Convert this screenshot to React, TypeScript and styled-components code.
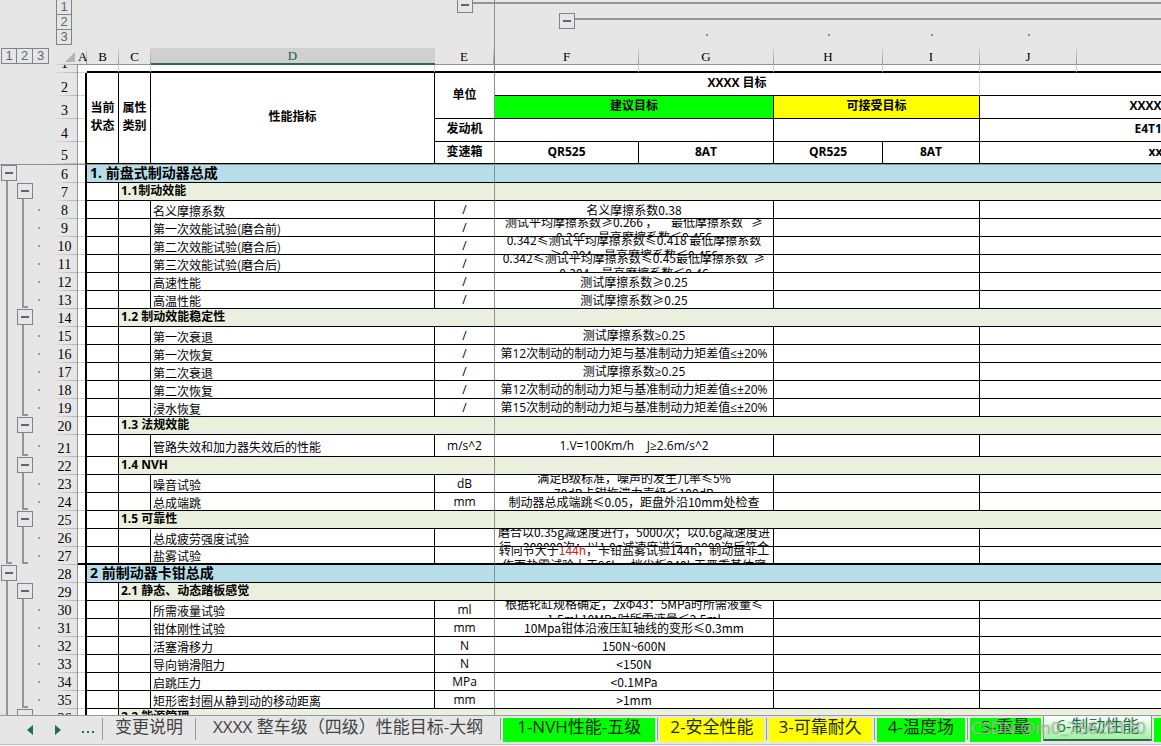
import React from "react";
import styled, { createGlobalStyle, css } from "styled-components";

const UI = '"Open Sans", "Noto Sans CJK SC", sans-serif';
const SONG = '"Noto Sans CJK SC", sans-serif';
const HEAD = '"Liberation Serif", serif';

const LINE = "#000";
const FAINT = "#d0d0d0";
const FREEZE = "#8f8f8f";
const CHROME = "#e6e6e6";
const OUTLINE = "#949494";

const GlobalStyle = createGlobalStyle`
  * { box-sizing: border-box; }
  body { margin: 0; background: ${CHROME}; font-family: ${UI}; font-size: 12px; color: #000; }
  :where(th, td) { padding: 0; }
  :where(button) { margin: 0; padding: 0; font: inherit; color: inherit; background: none; border: 0; cursor: pointer; }
`;

const Window = styled.div`
  display: flex;
  flex-direction: column;
  height: 100vh;
  overflow: hidden;
  background: ${CHROME};
`;

const Sheet = styled.main`
  flex: 1;
  min-height: 0;
  overflow: hidden;
`;

const Grid = styled.table`
  width: 1338px;
  table-layout: fixed;
  border-collapse: separate;
  border-spacing: 0;
  line-height: 16px;
`;

const Col = styled.col<{ $w: number }>`
  width: ${(p) => p.$w}px;
`;

/* ---------- outline controls ---------- */

const ToggleButton = styled.button`
  display: flex;
  flex: none;
  align-items: center;
  justify-content: center;
  width: 16px;
  height: 16px;
  border: 1px solid #808488;

  &::before {
    content: "";
    width: 8px;
    height: 2px;
    background: #5f6368;
  }
`;

const levelButton = css`
  height: 16px;
  width: 16px;
  border: 1px solid #808488;
  font-family: "Liberation Sans", sans-serif;
  font-size: 13px;
  line-height: 14px;
  font-weight: 400;
  color: #666;
`;

const RowLevel = styled.button`
  ${levelButton}
  & + & { border-left: 0; }
`;

const ColumnLevel = styled.button`
  ${levelButton}
  & + & { border-top: 0; }
`;

const RowLevels = styled.div`
  display: flex;
  height: 16px;
  padding-left: 1px;
`;

const ColumnLevels = styled.div`
  display: flex;
  flex-direction: column;
  height: 48px;
  margin-left: 4px;
  overflow: hidden;
  justify-content: flex-end;
  padding-bottom: 3px;
`;

const ColumnTracks = styled.div`
  display: grid;
  grid-template-rows: 13px 16px 16px;
  height: 48px;
`;

const ColumnSlot = styled.div`
  display: flex;
  align-items: flex-end;
  overflow: hidden;
`;

const ColumnRail = styled.span<{ $on: boolean }>`
  flex: 1;
  height: 2px;
  margin-bottom: 9px;
  background: ${(p) => (p.$on ? OUTLINE : "transparent")};
`;

const ColumnDot = styled.span`
  width: 2px;
  height: 2px;
  margin: 5px auto auto;
  background: #8a8a8a;
`;

const RowTracks = styled.div<{ $h: number }>`
  display: grid;
  grid-template-columns: 16px 16px 16px;
  height: ${(p) => p.$h}px;
  padding-left: 1px;
`;

const RowSlot = styled.div`
  display: flex;
  flex-direction: column;
  min-height: 0;
`;

const RowRail = styled.span<{ $end?: boolean }>`
  flex: 1;
  width: ${(p) => (p.$end ? 6 : 2)}px;
  margin: 0 0 ${(p) => (p.$end ? 1 : 0)}px 5px;
  border-left: 2px solid ${OUTLINE};
  ${(p) => p.$end && css`border-bottom: 2px solid ${OUTLINE};`}
`;

const RowDot = styled.span`
  width: 2px;
  height: 2px;
  margin: auto auto auto 5px;
  background: #999;
`;

/* ---------- headers ---------- */

const OutlineHead = styled.th<{ $freeze?: boolean }>`
  border-right: ${(p) => (p.$freeze ? `1px solid ${FREEZE}` : 0)};
`;

const Letter = styled.th<{ $selected?: boolean; $freeze?: boolean }>`
  height: 17px;
  padding-right: 1px;
  font-family: ${HEAD};
  font-size: 13px;
  font-weight: 400;
  line-height: 14px;
  vertical-align: bottom;
  white-space: nowrap;
  color: ${(p) => (p.$selected ? "#1f5c3d" : "#000")};
  background: ${(p) => (p.$selected ? "#d0d0d0" : "linear-gradient(#d8d8d8, #999) right / 1px 100% no-repeat")};
  border-bottom: ${(p) => (p.$selected ? "2px solid #2b6b4c" : `1px solid ${OUTLINE}`)};
  border-right: ${(p) => (p.$freeze ? `1px solid ${FREEZE}` : 0)};
`;

const Corner = styled.th`
  height: 17px;
  vertical-align: middle;
  background: linear-gradient(to right, ${CHROME}, ${OUTLINE}) bottom / 100% 1px no-repeat;

  svg { display: block; margin: 0 3px 0 auto; }
`;

const LevelCell = styled.th`
  vertical-align: top;
`;

const Gutter = styled.td<{ $frozenTop?: boolean }>`
  vertical-align: top;
  border-top: ${(p) => (p.$frozenTop ? `1px solid ${FREEZE}` : 0)};
`;

const RowHead = styled.th<{ $frozenTop?: boolean }>`
  vertical-align: bottom;
  border-right: 1px solid ${OUTLINE};
  border-top: ${(p) => (p.$frozenTop ? `1px solid ${FREEZE}` : 0)};
  background: linear-gradient(to right, ${CHROME}, #b0b0b0) bottom / 100% 1px no-repeat;
  font-family: ${HEAD};
  font-size: 14px;
  font-weight: 400;
  line-height: 14px;
`;

const RowNumber = styled.div<{ $clip?: boolean }>`
  display: flex;
  flex-direction: column;
  justify-content: ${(p) => (p.$clip ? "flex-end" : "flex-start")};
  height: ${(p) => (p.$clip ? 6 : 14)}px;
  margin-bottom: ${(p) => (p.$clip ? 2 : 1)}px;
  overflow: hidden;
`;

/* ---------- cells ---------- */

type CellProps = {
  $h?: number;
  $right?: string;
  $bottom?: string;
  $thick?: boolean;
  $bg?: string;
  $frozenTop?: boolean;
};

const Cell = styled.td<CellProps>`
  height: ${(p) => (p.$h ? `${p.$h}px` : "auto")};
  background: ${(p) => p.$bg ?? "#fff"};
  border-right: ${(p) => (p.$right ? `1px solid ${p.$right}` : 0)};
  border-bottom: ${(p) => (p.$thick ? 2 : 1)}px solid ${(p) => p.$bottom ?? LINE};
  border-top: ${(p) => (p.$frozenTop ? `1px solid ${FREEZE}` : 0)};
  text-align: center;
  vertical-align: middle;
`;

const EdgeCell = styled.td<CellProps>`
  height: ${(p) => p.$h}px;
  border-right: 2px solid ${LINE};
  border-top: ${(p) => (p.$frozenTop ? `1px solid ${FREEZE}` : 0)};
  background:
    linear-gradient(${(p) => p.$bottom}, ${(p) => p.$bottom}) bottom / 100% ${(p) => (p.$thick ? 2 : 1)}px no-repeat,
    #fff;
`;

const TitleCell = styled(Cell)`
  font-weight: 700;
  line-height: 18px;
  padding-bottom: 2px;
`;

const ChapterCell = styled(Cell)`
  padding-left: 3px;
  font-size: 14px;
  font-weight: 700;
  line-height: 14px;
  padding-bottom: 2px;
  text-align: left;
  white-space: nowrap;
`;

const SectionCell = styled(Cell)`
  padding-left: 2px;
  font-weight: 700;
  line-height: 14px;
  padding-bottom: 2px;
  text-align: left;
  white-space: nowrap;
`;

const LabelCell = styled(Cell)`
  padding: 2px 0 0 2px;
  font-family: ${SONG};
  line-height: 14px;
  text-align: left;
  white-space: nowrap;
`;

const Clip = styled.div<{ $song?: boolean; $h: number }>`
  display: flex;
  flex-direction: column;
  align-items: center;
  justify-content: center;
  height: ${(p) => p.$h}px;
  overflow: hidden;
  font-family: ${(p) => (p.$song ? SONG : UI)};
  line-height: 16px;
  white-space: pre;
`;

const Wrapped = styled.div`
  flex: none;
  padding-top: 3px;
  line-height: 15px;
  text-align: center;
`;

const Alert = styled.span`
  color: #d42020;
`;

/* ---------- sheet tabs ---------- */

const TabBar = styled.nav`
  display: flex;
  flex: none;
  height: 31px;
  border-top: 1px solid #999;
  overflow: hidden;
  position: relative;
  font-size: 17px;
  line-height: 18px;
`;

const TabNav = styled.div`
  display: flex;
  flex: none;
  align-items: center;
  width: 102px;
  padding: 0 8px 2px 26px;
  gap: 20px;

  svg { display: block; }
`;

const Tab = styled.button<{ $bg?: string; $pad?: number }>`
  flex: none;
  height: 24px;
  margin: 2px 2px 0;
  padding: 0 ${(p) => p.$pad ?? 10}px 6px;
  white-space: nowrap;
  color: ${(p) => (p.$bg ? "#1c2a10" : "#444")};
  background: ${(p) => p.$bg ?? "transparent"};
`;

const ActiveTab = styled.button`
  flex: none;
  height: 25px;
  padding: 0 12px 3px;
  white-space: nowrap;
  color: #217346;
  background: linear-gradient(#fff, #9df59d);
  border: solid #8f8f8f;
  border-width: 0 1px;
  border-bottom: 2px solid #2b6b4c;
`;

const Divider = styled.span`
  flex: none;
  width: 1px;
  height: 22px;
  margin-top: 2px;
  background: #999;
`;

const TabFloor = styled.div`
  position: absolute;
  left: 0;
  right: 0;
  bottom: 0;
  height: 2px;
  background: #f2f2f2;
  border-top: 1px solid #c4c4c4;
`;

const Watermark = styled.span`
  position: absolute;
  right: 15px;
  top: 3px;
  color: rgba(235, 235, 235, 0.6);
  text-shadow: 0 0 1px rgba(70, 70, 70, 0.8);
  white-space: nowrap;
  pointer-events: none;
`;

/* ---------- data ---------- */

type Track = "box" | "line" | "end" | undefined;
type Row = {
  n: number;
  kind: "chapter" | "section" | "item";
  text: string;
  unit?: string;
  value?: React.ReactNode[];
  song?: boolean;
  l1: Track;
  l2?: Track;
  h?: number;
  thick?: boolean;
};

const rows: Row[] = [
  { n: 6, kind: "chapter", text: "1. 前盘式制动器总成", l1: "box" },
  { n: 7, kind: "section", text: "1.1制动效能", l1: "line", l2: "box" },
  { n: 8, kind: "item", text: "名义摩擦系数", unit: "/", value: ["名义摩擦系数0.38"], song: true, l1: "line", l2: "line" },
  { n: 9, kind: "item", text: "第一次效能试验(磨合前)", unit: "/", value: ["测试平均摩擦系数≥0.266 ，     最低摩擦系数   ≥", "0.266，最高摩擦系数≤0.456"], song: true, l1: "line", l2: "line" },
  { n: 10, kind: "item", text: "第二次效能试验(磨合后)", unit: "/", value: ["0.342≤测试平均摩擦系数≤0.418 最低摩擦系数", "≥0.304，最高摩擦系数≤0.456"], song: true, l1: "line", l2: "line" },
  { n: 11, kind: "item", text: "第三次效能试验(磨合后)", unit: "/", value: ["0.342≤测试平均摩擦系数≤0.45最低摩擦系数  ≥", "0.304，最高摩擦系数≤0.46"], song: true, l1: "line", l2: "line" },
  { n: 12, kind: "item", text: "高速性能", unit: "/", value: ["测试摩擦系数≥0.25"], song: true, l1: "line", l2: "line" },
  { n: 13, kind: "item", text: "高温性能", unit: "/", value: ["测试摩擦系数≥0.25"], song: true, l1: "line", l2: "end" },
  { n: 14, kind: "section", text: "1.2 制动效能稳定性", l1: "line", l2: "box" },
  { n: 15, kind: "item", text: "第一次衰退", unit: "/", value: ["测试摩擦系数≥0.25"], l1: "line", l2: "line" },
  { n: 16, kind: "item", text: "第一次恢复", unit: "/", value: ["第12次制动的制动力矩与基准制动力矩差值≤±20%"], l1: "line", l2: "line" },
  { n: 17, kind: "item", text: "第二次衰退", unit: "/", value: ["测试摩擦系数≥0.25"], l1: "line", l2: "line" },
  { n: 18, kind: "item", text: "第二次恢复", unit: "/", value: ["第12次制动的制动力矩与基准制动力矩差值≤±20%"], l1: "line", l2: "line" },
  { n: 19, kind: "item", text: "浸水恢复", unit: "/", value: ["第15次制动的制动力矩与基准制动力矩差值≤±20%"], l1: "line", l2: "end" },
  { n: 20, kind: "section", text: "1.3 法规效能", l1: "line", l2: "box" },
  { n: 21, kind: "item", text: "管路失效和加力器失效后的性能", unit: "m/s^2", value: ["1.V=100Km/h    J≥2.6m/s^2"], l1: "line", l2: "end", h: 22 },
  { n: 22, kind: "section", text: "1.4 NVH", l1: "line", l2: "box" },
  { n: 23, kind: "item", text: "噪音试验", unit: "dB", value: ["满足B级标准，噪声的发生几率≤5%", "70dB卡钳拖滞力声级≤100dB"], song: true, l1: "line", l2: "line" },
  { n: 24, kind: "item", text: "总成端跳", unit: "mm", value: ["制动器总成端跳≤0.05，距盘外沿10mm处检查"], song: true, l1: "line", l2: "end" },
  { n: 25, kind: "section", text: "1.5 可靠性", l1: "line", l2: "box" },
  { n: 26, kind: "item", text: "总成疲劳强度试验", value: ["磨合以0.35g减速度进行，5000次；以0.6g减速度进", "行，200000次；以1.0g减速度进行，2000次后符合"], song: true, l1: "line", l2: "line" },
  { n: 27, kind: "item", text: "盐雾试验", value: [<>转向节大于<Alert>144h</Alert>，卡钳盐雾试验144h，制动盘非工</>, "作面盐雾试验大于96h，挡尘板240h无严重基体腐"], song: true, l1: "end", l2: "end", thick: true },
  { n: 28, kind: "chapter", text: "2 前制动器卡钳总成", l1: "box" },
  { n: 29, kind: "section", text: "2.1 静态、动态踏板感觉", l1: "line", l2: "box" },
  { n: 30, kind: "item", text: "所需液量试验", unit: "ml", value: ["根据轮缸规格确定，2xΦ43：5MPa时所需液量≤", "1.5ml 10MPa时所需液量≤2.5ml"], song: true, l1: "line", l2: "line" },
  { n: 31, kind: "item", text: "钳体刚性试验", unit: "mm", value: ["10Mpa钳体沿液压缸轴线的变形≤0.3mm"], song: true, l1: "line", l2: "line" },
  { n: 32, kind: "item", text: "活塞滑移力", unit: "N", value: ["150N~600N"], song: true, l1: "line", l2: "line" },
  { n: 33, kind: "item", text: "导向销滑阻力", unit: "N", value: ["<150N"], song: true, l1: "line", l2: "line" },
  { n: 34, kind: "item", text: "启跳压力", unit: "MPa", value: ["<0.1MPa"], song: true, l1: "line", l2: "line" },
  { n: 35, kind: "item", text: "矩形密封圈从静到动的移动距离", unit: "mm", value: [">1mm"], song: true, l1: "line", l2: "end" },
  { n: 36, kind: "section", text: "2.2 能源管理", l1: "line", l2: "box" },
];

const BLUE = "#b7dde8";
const OLIVE = "#ebf0de";
const GREEN = "#00ff00";
const YELLOW = "#ffff00";

const columns = [52, 26, 9, 32, 32, 284, 60, 144, 135, 109, 97, 97, 261];
const letters = ["A", "B", "C", "D", "E", "F", "G", "H", "I", "J", "K"];

function RowTrack({ kind }: { kind: Track }) {
  if (!kind) return <RowSlot />;
  if (kind === "box")
    return (
      <RowSlot>
        <ToggleButton aria-label="折叠行" />
        <RowRail />
      </RowSlot>
    );
  return (
    <RowSlot>
      <RowRail $end={kind === "end"} />
    </RowSlot>
  );
}

function ColumnOutline({ letter }: { letter: string }) {
  const i = letters.indexOf(letter);
  return (
    <ColumnTracks>
      <ColumnSlot>
        {i >= 4 && <ColumnRail $on={i > 4} />}
        {i === 4 && <ToggleButton aria-label="折叠列" />}
        {i === 4 && <ColumnRail $on />}
      </ColumnSlot>
      <ColumnSlot>
        {i >= 5 && <ColumnRail $on={i > 5} />}
        {i === 5 && <ToggleButton aria-label="折叠列" />}
        {i === 5 && <ColumnRail $on />}
      </ColumnSlot>
      <ColumnSlot>{i >= 6 && <ColumnDot />}</ColumnSlot>
    </ColumnTracks>
  );
}

function BodyRow({ row }: { row: Row }) {
  const h = row.h ?? 18;
  const first = row.n === 6;
  const full = first ? h + 1 : h;
  const edge = { $h: full, $frozenTop: first, $thick: row.thick };
  return (
    <tr>
      <Gutter $frozenTop={first}>
        <RowTracks $h={h}>
          <RowTrack kind={row.l1} />
          <RowTrack kind={row.l2} />
          <RowSlot>{row.kind === "item" && <RowDot />}</RowSlot>
        </RowTracks>
      </Gutter>
      <RowHead scope="row" $frozenTop={first}>
        <RowNumber>{row.n}</RowNumber>
      </RowHead>
      <EdgeCell {...edge} $bottom={row.thick ? LINE : FAINT} />
      {row.kind === "chapter" && (
        <>
          <ChapterCell {...edge} $bg={BLUE} $right={FREEZE} colSpan={4}>{row.text}</ChapterCell>
          <Cell {...edge} $bg={BLUE} colSpan={6} />
        </>
      )}
      {row.kind === "section" && (
        <>
          <Cell {...edge} $right={LINE} />
          <SectionCell {...edge} $bg={OLIVE} $right={FREEZE} colSpan={3}>{row.text}</SectionCell>
          <Cell {...edge} $bg={OLIVE} colSpan={6} />
        </>
      )}
      {row.kind === "item" && (
        <>
          <Cell {...edge} $right={LINE} />
          <Cell {...edge} $right={LINE} />
          <LabelCell {...edge} $right={LINE}>{row.text}</LabelCell>
          <Cell {...edge} $right={FREEZE}>{row.unit}</Cell>
          <Cell {...edge} $right={LINE} colSpan={2}>
            <Clip $song={row.song} $h={h - (row.thick ? 2 : 1)}>
              {row.value && row.value.length > 1 ? (
                <Wrapped>
                  {row.value[0]}
                  <br />
                  {row.value[1]}
                </Wrapped>
              ) : (
                row.value
              )}
            </Clip>
          </Cell>
          <Cell {...edge} $right={LINE} colSpan={2} />
          <Cell {...edge} colSpan={2} />
        </>
      )}
    </tr>
  );
}

function FrozenLead({ n }: { n: number }) {
  return (
    <>
      <Gutter />
      <RowHead scope="row">
        <RowNumber>{n}</RowNumber>
      </RowHead>
      <EdgeCell $h={n === 5 ? 22 : 23} $bottom={FAINT} />
    </>
  );
}

export default function App() {
  return (
    <Window>
      <GlobalStyle />
      <Sheet>
        <Grid>
          <colgroup>
            {columns.map((w, i) => <Col key={i} $w={w} />)}
          </colgroup>
          <thead>
            <tr>
              <OutlineHead />
              <OutlineHead>
                <ColumnLevels>
                  <ColumnLevel>1</ColumnLevel>
                  <ColumnLevel>2</ColumnLevel>
                  <ColumnLevel>3</ColumnLevel>
                </ColumnLevels>
              </OutlineHead>
              {letters.map((l) => (
                <OutlineHead key={l} $freeze={l === "E"}>
                  <ColumnOutline letter={l} />
                </OutlineHead>
              ))}
            </tr>
            <tr>
              <LevelCell>
                <RowLevels>
                  <RowLevel>1</RowLevel>
                  <RowLevel>2</RowLevel>
                  <RowLevel>3</RowLevel>
                </RowLevels>
              </LevelCell>
              <Corner>
                <svg width="10" height="10" viewBox="0 0 10 10" aria-hidden="true">
                  <path d="M10 0V10H0Z" fill="#b4b4b4" />
                </svg>
              </Corner>
              {letters.map((l) => (
                <Letter key={l} scope="col" $selected={l === "D"} $freeze={l === "E"}>{l}</Letter>
              ))}
            </tr>
          </thead>
          <tbody>
            <tr>
              <Gutter />
              <RowHead scope="row">
                <RowNumber $clip>1</RowNumber>
              </RowHead>
              <Cell $h={8} $bottom={FAINT} />
              {letters.slice(1).map((l) => (
                <Cell key={l} $h={8} $thick $right={l === "E" ? FREEZE : FAINT} />
              ))}
            </tr>
            <tr>
              <FrozenLead n={2} />
              <TitleCell $right={LINE} rowSpan={4}>当前<br />状态</TitleCell>
              <TitleCell $right={LINE} rowSpan={4}>属性<br />类别</TitleCell>
              <TitleCell $right={LINE} rowSpan={4}>性能指标</TitleCell>
              <TitleCell $right={FREEZE} rowSpan={2}>单位</TitleCell>
              <TitleCell $right={FAINT} colSpan={4}>XXXX 目标</TitleCell>
              <TitleCell colSpan={2} />
            </tr>
            <tr>
              <FrozenLead n={3} />
              <TitleCell $right={LINE} $bg={GREEN} colSpan={2}>建议目标</TitleCell>
              <TitleCell $right={LINE} $bg={YELLOW} colSpan={2}>可接受目标</TitleCell>
              <TitleCell colSpan={2}>XXXX 目标</TitleCell>
            </tr>
            <tr>
              <FrozenLead n={4} />
              <TitleCell $right={FREEZE}>发动机</TitleCell>
              <TitleCell $right={LINE} colSpan={2} />
              <TitleCell $right={LINE} colSpan={2} />
              <TitleCell colSpan={2}>E4T15B+</TitleCell>
            </tr>
            <tr>
              <FrozenLead n={5} />
              <TitleCell $right={FREEZE}>变速箱</TitleCell>
              <TitleCell $right={LINE}>QR525</TitleCell>
              <TitleCell $right={LINE}>8AT</TitleCell>
              <TitleCell $right={LINE}>QR525</TitleCell>
              <TitleCell $right={LINE}>8AT</TitleCell>
              <TitleCell colSpan={2}>xxx</TitleCell>
            </tr>
            {rows.map((r) => <BodyRow key={r.n} row={r} />)}
          </tbody>
        </Grid>
      </Sheet>
      <TabBar aria-label="工作表">
        <TabNav>
          <button aria-label="上一张">
            <svg width="8" height="10" viewBox="0 0 8 10"><path d="M7 0V10L1 5Z" fill="#1e7145" /></svg>
          </button>
          <button aria-label="下一张">
            <svg width="8" height="10" viewBox="0 0 8 10"><path d="M1 0V10L7 5Z" fill="#1e7145" /></svg>
          </button>
          <button aria-label="更多工作表">
            <svg width="14" height="10" viewBox="0 0 14 10" fill="#1e7145">
              <rect x="0" y="6" width="2" height="2" />
              <rect x="5" y="6" width="2" height="2" />
              <rect x="10" y="6" width="2" height="2" />
            </svg>
          </button>
        </TabNav>
        <Divider />
        <Tab>变更说明</Tab>
        <Divider />
        <Tab $pad={15}>XXXX 整车级（四级）性能目标-大纲</Tab>
        <Divider />
        <Tab $bg={GREEN} $pad={14}>1-NVH性能-五级</Tab>
        <Divider />
        <Tab $bg={YELLOW}>2-安全性能</Tab>
        <Divider />
        <Tab $bg={YELLOW}>3-可靠耐久</Tab>
        <Divider />
        <Tab $bg={GREEN} $pad={11}>4-温度场</Tab>
        <Divider />
        <Tab $bg={GREEN} $pad={11}>5-重量</Tab>
        <ActiveTab aria-current="page">6-制动性能</ActiveTab>
        <Tab $bg={GREEN}>7-底盘</Tab>
        <TabFloor />
        <Watermark>CSDN @m0_75629130</Watermark>
      </TabBar>
    </Window>
  );
}
